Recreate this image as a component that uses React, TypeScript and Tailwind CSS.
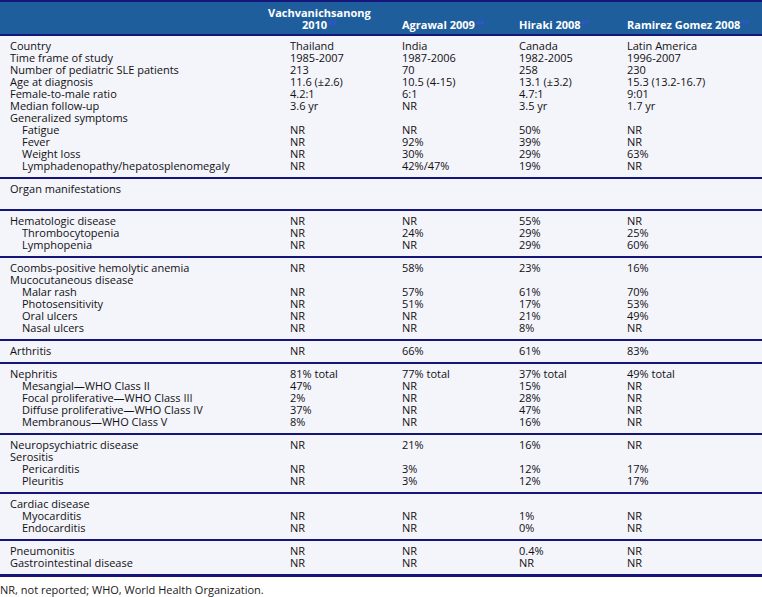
import React from 'react';

type Row = { label: string; indent?: boolean; values?: string[] };

const groups: { rows: Row[]; extra?: boolean }[] = [
    {
        rows: [
            { label: "Country", values: ["Thailand", "India", "Canada", "Latin America"] },
            { label: "Time frame of study", values: ["1985-2007", "1987-2006", "1982-2005", "1996-2007"] },
            { label: "Number of pediatric SLE patients", values: ["213", "70", "258", "230"] },
            { label: "Age at diagnosis", values: ["11.6 (\u00b12.6)", "10.5 (4-15)", "13.1 (\u00b13.2)", "15.3 (13.2-16.7)"] },
            { label: "Female-to-male ratio", values: ["4.2:1", "6:1", "4.7:1", "9:01"] },
            { label: "Median follow-up", values: ["3.6 yr", "NR", "3.5 yr", "1.7 yr"] },
            { label: "Generalized symptoms" },
            { label: "Fatigue", indent: true, values: ["NR", "NR", "50%", "NR"] },
            { label: "Fever", indent: true, values: ["NR", "92%", "39%", "NR"] },
            { label: "Weight loss", indent: true, values: ["NR", "30%", "29%", "63%"] },
            { label: "Lymphadenopathy/hepatosplenomegaly", indent: true, values: ["NR", "42%/47%", "19%", "NR"] },
        ],
    },
    { rows: [{ label: "Organ manifestations" }], extra: true },
    {
        rows: [
            { label: "Hematologic disease", values: ["NR", "NR", "55%", "NR"] },
            { label: "Thrombocytopenia", indent: true, values: ["NR", "24%", "29%", "25%"] },
            { label: "Lymphopenia", indent: true, values: ["NR", "NR", "29%", "60%"] },
        ],
    },
    {
        rows: [
            { label: "Coombs-positive hemolytic anemia", values: ["NR", "58%", "23%", "16%"] },
            { label: "Mucocutaneous disease" },
            { label: "Malar rash", indent: true, values: ["NR", "57%", "61%", "70%"] },
            { label: "Photosensitivity", indent: true, values: ["NR", "51%", "17%", "53%"] },
            { label: "Oral ulcers", indent: true, values: ["NR", "NR", "21%", "49%"] },
            { label: "Nasal ulcers", indent: true, values: ["NR", "NR", "8%", "NR"] },
        ],
    },
    { rows: [{ label: "Arthritis", values: ["NR", "66%", "61%", "83%"] }] },
    {
        rows: [
            { label: "Nephritis", values: ["81% total", "77% total", "37% total", "49% total"] },
            { label: "Mesangial\u2014WHO Class II", indent: true, values: ["47%", "NR", "15%", "NR"] },
            { label: "Focal proliferative\u2014WHO Class III", indent: true, values: ["2%", "NR", "28%", "NR"] },
            { label: "Diffuse proliferative\u2014WHO Class IV", indent: true, values: ["37%", "NR", "47%", "NR"] },
            { label: "Membranous\u2014WHO Class V", indent: true, values: ["8%", "NR", "16%", "NR"] },
        ],
    },
    {
        rows: [
            { label: "Neuropsychiatric disease", values: ["NR", "21%", "16%", "NR"] },
            { label: "Serositis" },
            { label: "Pericarditis", indent: true, values: ["NR", "3%", "12%", "17%"] },
            { label: "Pleuritis", indent: true, values: ["NR", "3%", "12%", "17%"] },
        ],
    },
    {
        rows: [
            { label: "Cardiac disease" },
            { label: "Myocarditis", indent: true, values: ["NR", "NR", "1%", "NR"] },
            { label: "Endocarditis", indent: true, values: ["NR", "NR", "0%", "NR"] },
        ],
    },
    {
        rows: [
            { label: "Pneumonitis", values: ["NR", "NR", "0.4%", "NR"] },
            { label: "Gastrointestinal disease", values: ["NR", "NR", "NR", "NR"] },
        ],
    },
];

// small blue reference number next to header text
const Sup = ({ n }: { n: string }) => (
    <span className="inline-block text-[7px] leading-[7px] font-bold text-[#3553d8] ml-[1px] align-top">{n}</span>
);

const App = () => {
    return (
        <div className="w-[762px] h-[597px] bg-white text-[11px] leading-[12px] text-[#111111]" style={{ fontFamily: '"Open Sans", sans-serif' }}>
            <div className="bg-[#f4f4fb]">
                {/* header */}
                <div className="flex items-end bg-[#1f5e9c] border-t-2 border-b-2 border-[#15157a] h-[36px] pb-[3px] font-bold text-white">
                    <div className="w-[268px]" />
                    <div className="w-[102px] text-center">
                        Vachvanichsanong
                        <br />
                        2010<Sup n="43" />
                    </div>
                    <div className="w-[32px]" />
                    <div className="w-[117px]">Agrawal 2009<Sup n="44" /></div>
                    <div className="w-[108px]">Hiraki 2008<Sup n="41" /></div>
                    <div className="flex-1">Ramirez Gomez 2008<Sup n="11" /></div>
                </div>

                {groups.map((g, gi) => (
                    <div
                        key={gi}
                        className={`pt-[4px] ${g.extra ? "pb-[14px]" : "pb-[5px]"} ${gi === groups.length - 1 ? "border-b-[3px]" : "border-b-2"} border-[#15157a]`}
                    >
                        {g.rows.map((r, ri) => (
                            <div key={ri} className="grid grid-cols-[290px_112px_117px_108px_1fr] h-[12px]">
                                <div className={r.indent ? "pl-[22px]" : "pl-[10px]"}>{r.label}</div>
                                {(r.values || ["", "", "", ""]).map((v, vi) => (
                                    <div key={vi}>{v}</div>
                                ))}
                            </div>
                        ))}
                    </div>
                ))}
            </div>
            <div className="pt-[7px] text-[#1a1a1a]">NR, not reported; WHO, World Health Organization.</div>
        </div>
    );
};

export default App;
